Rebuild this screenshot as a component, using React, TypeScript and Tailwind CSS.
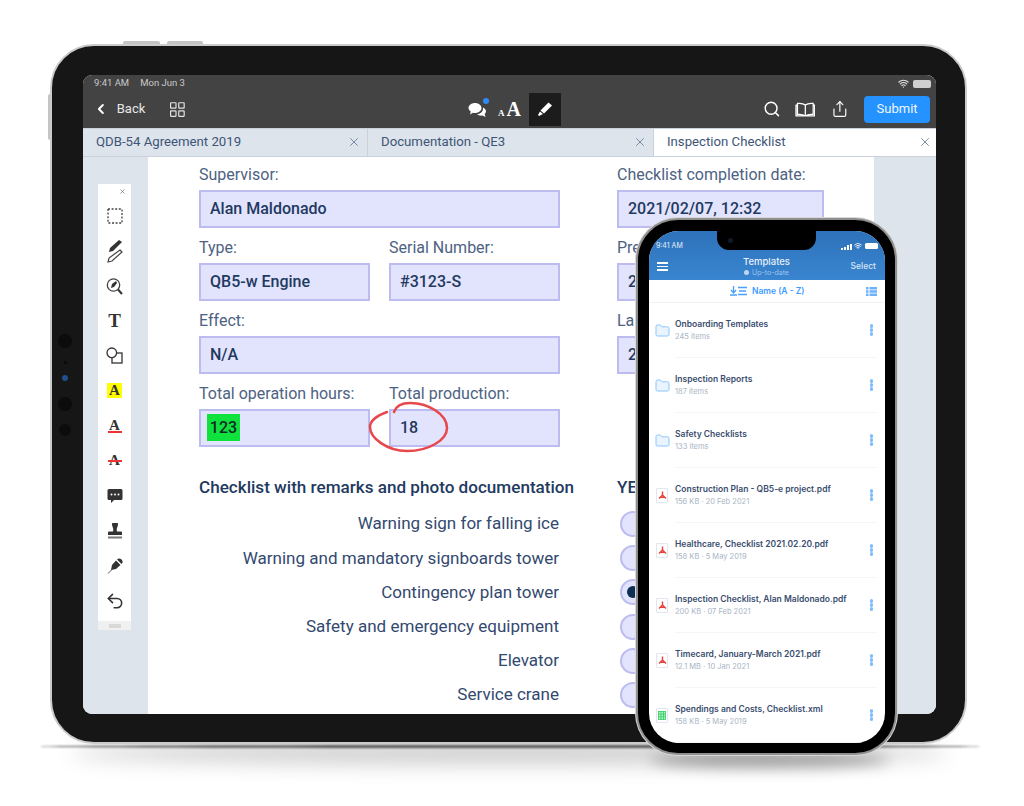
import { ChevronLeft, Search, Share, Undo2, Wifi, X } from "lucide-react";

// TABLET FORM DATA
const checklist = [
  { label: "Warning sign for falling ice", checked: false },
  { label: "Warning and mandatory signboards tower", checked: false },
  { label: "Contingency plan tower", checked: true },
  { label: "Safety and emergency equipment", checked: false },
  { label: "Elevator", checked: false },
  { label: "Service crane", checked: false },
];

// PHONE LIST DATA
const files = [
  { name: "Onboarding Templates", meta: "245 items", type: "folder" },
  { name: "Inspection Reports", meta: "187 items", type: "folder" },
  { name: "Safety Checklists", meta: "133 items", type: "folder" },
  { name: "Construction Plan - QB5-e project.pdf", meta: "156 KB · 20 Feb 2021", type: "pdf" },
  { name: "Healthcare, Checklist 2021.02.20.pdf", meta: "158 KB · 5 May 2019", type: "pdf" },
  { name: "Inspection Checklist, Alan Maldonado.pdf", meta: "200 KB · 07 Feb 2021", type: "pdf" },
  { name: "Timecard, January-March 2021.pdf", meta: "12.1 MB · 10 Jan 2021", type: "pdf" },
  { name: "Spendings and Costs, Checklist.xml", meta: "158 KB · 5 May 2019", type: "sheet" },
];

const Field = ({ label, value, className }: { label: string; value: string; className: string }) => (
  <div className={className}>
    <div className="h-[20px] mb-[5px] text-[16px] leading-[20px] text-[#4d6282] whitespace-nowrap">{label}</div>
    <div className="h-[38px] flex items-center pl-[9px] pb-[1px] border-2 border-[#bcbcf0] bg-[#e2e3fd] text-[16px] font-medium text-[#1f3a60] whitespace-nowrap">
      {value}
    </div>
  </div>
);

const SerifA = ({ className }: { className: string }) => (
  <span className={`font-['Liberation_Serif',serif] font-bold leading-none text-[#333] ${className}`}>A</span>
);

const ToolSlot = ({ children }: { children: React.ReactNode }) => (
  <div className="h-[35px] flex items-center justify-center text-[#333]">{children}</div>
);

// LEFT ANNOTATION TOOLBAR
const Toolbar = () => (
  <div className="w-[33px] h-[446px] bg-white flex flex-col">
    <div className="h-[14px] flex justify-end pt-[4px] pr-[5px]">
      <X size={7} strokeWidth={2} className="text-[#555]" />
    </div>
    <ToolSlot>
      <svg width="16" height="16" viewBox="0 0 16 16" fill="none" stroke="#444" strokeWidth="1.3" strokeDasharray="2 1.6">
        <rect x="1" y="1" width="14" height="14" />
      </svg>
    </ToolSlot>
    <ToolSlot>
      <svg width="16" height="24" viewBox="0 0 16 24" fill="none">
        <path d="M12 1 15 3 6 12 2 13 3 9Z" fill="#333" />
        <path d="M13 11 15 13 5 22 1 23 2 19Z" fill="#fff" stroke="#444" strokeWidth="1.2" />
      </svg>
    </ToolSlot>
    <ToolSlot>
      <svg width="17" height="18" viewBox="0 0 17 18" fill="none">
        <circle cx="7.5" cy="8" r="6.2" stroke="#444" strokeWidth="1.3" />
        <path d="M5 11 6 7 10 4 11 6 8 10Z" fill="#333" />
        <path d="M12 12.5 16 17" stroke="#333" strokeWidth="2" />
      </svg>
    </ToolSlot>
    <ToolSlot>
      <span className="font-['Liberation_Serif',serif] font-bold text-[19px] leading-none text-[#333]">T</span>
    </ToolSlot>
    <ToolSlot>
      <svg width="17" height="17" viewBox="0 0 17 17" fill="#fff" stroke="#333" strokeWidth="1.3">
        <rect x="6" y="6" width="10" height="10" />
        <circle cx="5.8" cy="5.8" r="4.8" />
      </svg>
    </ToolSlot>
    <ToolSlot>
      <div className="w-[15px] h-[15px] bg-[#ffff00] flex items-center justify-center">
        <SerifA className="text-[15px]" />
      </div>
    </ToolSlot>
    <ToolSlot>
      <div className="w-[14px] flex flex-col items-center">
        <SerifA className="text-[15px] h-[13px]" />
        <div className="w-[14px] h-[2px] bg-[#e33]" />
      </div>
    </ToolSlot>
    <ToolSlot>
      <div className="relative w-[14px] flex justify-center">
        <SerifA className="text-[15px]" />
        <div className="absolute left-0 top-[7px] w-[14px] h-[1.5px] bg-[#e33]" />
      </div>
    </ToolSlot>
    <ToolSlot>
      <svg width="16" height="16" viewBox="0 0 16 16">
        <path d="M2 1h12a1.5 1.5 0 0 1 1.5 1.5v8a1.5 1.5 0 0 1-1.5 1.5H7l-3 3v-3H2A1.5 1.5 0 0 1 .5 10.500v-8A1.500 1.500 0 0 1 2 1Z" fill="#333" />
        <circle cx="4.500" cy="6.500" r="1" fill="#fff" />
        <circle cx="8" cy="6.500" r="1" fill="#fff" />
        <circle cx="11.500" cy="6.500" r="1" fill="#fff" />
      </svg>
    </ToolSlot>
    <ToolSlot>
      <svg width="16" height="16" viewBox="0 0 16 16" fill="#333">
        <path d="M5 1.500a3 3 0 0 1 6 0c0 2-1.300 3-1.300 5.500 0 1 .3 1.500 1 1.500H14a1 1 0 0 1 1 1V12H1V9.500a1 1 0 0 1 1-1h3.300c.7 0 1-.5 1-1.500C6.300 4.500 5 3.500 5 1.500Z" />
        <rect x="1" y="13.500" width="14" height="2" fill="#777" />
      </svg>
    </ToolSlot>
    <ToolSlot>
      <svg width="16" height="16" viewBox="0 0 16 16" fill="none">
        <path d="M9 2.500 13.500 7 9 11 4 12l1-5Z" fill="#333" />
        <path d="M10 1.500a2 2 0 0 1 4.500 4.500Z" fill="#333" />
        <path d="M5 11.500 1 15.500" stroke="#555" strokeWidth="1" />
      </svg>
    </ToolSlot>
    <ToolSlot>
      <Undo2 size={20} strokeWidth={1.9} className="text-[#333]" />
    </ToolSlot>
    <div className="flex-1" />
    <div className="h-[9px] bg-[#f0f0f0] flex items-center justify-center">
      <div className="w-[12px] h-[4px] bg-[#d8d8d8]" />
    </div>
  </div>
);

// TABLET
const Tablet = () => (
  <div className="relative w-[917px] h-[700px] rounded-[44px] bg-[#161616] border-2 border-[#cbcbcb] pt-[29px] pb-[28px] pl-[31px] pr-[29px]">
    {/* Side camera dots */}
    <div className="absolute left-[6px] top-[288px] w-[14px] flex flex-col items-center">
      <div className="w-[14px] h-[14px] rounded-full bg-[#0c0c0c]" />
      <div className="mt-[13px] w-[3px] h-[3px] rounded-full bg-[#090909]" />
      <div className="mt-[11px] w-[6px] h-[6px] rounded-full bg-[#1f4f8c]" />
      <div className="mt-[16px] w-[14px] h-[14px] rounded-full bg-[#0c0c0c]" />
      <div className="mt-[13px] w-[12px] h-[12px] rounded-full bg-[#0c0c0c]" />
    </div>

    <div className="w-full h-full rounded-[9px] overflow-hidden bg-white flex flex-col font-['Roboto',sans-serif]">
      {/* STATUS BAR */}
      <div className="h-[17px] bg-[#434343] flex items-center pl-[11px] pr-[5px] text-[9.500px] text-[#c9c9c9] shrink-0">
        <span>9:41 AM</span>
        <span className="ml-[11px]">Mon Jun 3</span>
        <Wifi size={11} strokeWidth={2.5} className="ml-auto text-[#e0e0e0]" />
        <div className="ml-[4px] w-[18px] h-[8px] rounded-[2px] bg-[#cfcfcf]" />
      </div>

      {/* TOP BAR */}
      <div className="h-[36px] bg-[#434343] flex items-center pb-[2px] pl-[11px] pr-[6px] text-white shrink-0">
        <ChevronLeft size={16} strokeWidth={3} className="-ml-[1px]" />
        <span className="ml-[8px] text-[13px] text-[#e8e8e8]">Back</span>
        <svg className="ml-[25px]" width="15" height="15" viewBox="0 0 15 15" fill="none" stroke="#e4e4e4" strokeWidth="1.2">
          <rect x="0.600" y="0.600" width="5.500" height="5.500" rx="0.500" />
          <rect x="8.900" y="0.600" width="5.500" height="5.500" rx="0.500" />
          <rect x="0.600" y="8.900" width="5.500" height="5.500" rx="0.500" />
          <rect x="8.900" y="8.900" width="5.500" height="5.500" rx="0.500" />
        </svg>
        <div className="relative ml-[283px] w-[19px] h-[17px]">
          <svg width="19" height="17" viewBox="0 0 19 17" fill="#fff">
            <path d="M7 2c3.500 0 6.500 2.300 6.500 5S10.500 12 7 12c-.7 0-1.300-.1-2-.2L2 13.500l.8-3C1.300 9.500.5 8.300.5 7 .5 4.300 3.500 2 7 2Z" />
            <path d="M15 6.500c1.800.8 3 2.300 3 3.800 0 1-.5 2-1.300 2.700l.8 3-3-1.500c-2 .4-4-.1-5.500-1.200 3.500-.2 6.500-3 6-6.800Z" />
          </svg>
          <div className="absolute -top-[3px] right-[-2px] w-[6px] h-[6px] rounded-full bg-[#2f8bf5]" />
        </div>
        <div className="ml-[11px] w-[26px] flex items-baseline font-['Liberation_Serif',serif] font-bold text-white leading-none">
          <span className="text-[9px]">A</span>
          <span className="ml-[2px] text-[20px]">A</span>
        </div>
        <div className="ml-[5px] w-[33px] h-[33px] bg-[#1c1c1c] flex items-center justify-center">
          <svg width="16" height="16" viewBox="0 0 16 16" fill="#fff">
            <path d="M11.500 1.500 15 4.500 7 12.500 3.500 9.500Z" />
            <path d="M3 10.500 6 13 2 15 1 14Z" />
          </svg>
        </div>
        <Search size={18} strokeWidth={2} className="ml-[202px] text-white" />
        <svg className="ml-[14px]" width="21" height="15" viewBox="0 0 21 15" fill="none" stroke="#fff" strokeWidth="1.300" strokeLinejoin="round">
          <path d="M10.500 3C8.500 1.300 5.500 1 2.500 1.300V12.500c3-.3 6 0 8 1.500 2-1.500 5-1.800 8-1.500V1.300C15.500 1 12.500 1.300 10.500 3ZM10.500 3V14M2.500 3H1V14h19V3h-1.500" />
        </svg>
        <Share size={18} strokeWidth={1.6} className="ml-[16px] text-white" />
        <div className="ml-[15px] w-[67px] h-[27px] rounded-[4px] bg-[#2492ff] flex items-center justify-center text-[13px] text-[#eef6ff]">
          Submit
        </div>
      </div>

      {/* TABS */}
      <div className="h-[29px] flex shrink-0 text-[13.200px] text-[#3e5577] border-y border-[#c8d1dc]">
        <div className="w-[285px] bg-[#dde4ec] border-r border-[#c8d1dc] flex items-center pl-[13px] pr-[6px] pb-[2px] justify-between">
          QDB-54 Agreement 2019
          <X size={14} strokeWidth={1.5} className="text-[#6b7f99]" />
        </div>
        <div className="w-[286px] bg-[#dde4ec] border-r border-[#c8d1dc] flex items-center pl-[13px] pr-[6px] pb-[2px] justify-between">
          Documentation - QE3
          <X size={14} strokeWidth={1.5} className="text-[#6b7f99]" />
        </div>
        <div className="flex-1 bg-white flex items-center pl-[13px] pr-[4px] pb-[2px] justify-between">
          Inspection Checklist
          <X size={14} strokeWidth={1.5} className="text-[#6b7f99]" />
        </div>
      </div>

      {/* DOCUMENT AREA */}
      <div className="flex-1 flex min-h-0 bg-[#dde4ec]">
        <div className="w-[65px] shrink-0 pl-[15px] pt-[27px]">
          <Toolbar />
        </div>
        <div className="relative w-[726px] shrink-0 bg-white pl-[51px] pt-[8px] overflow-hidden">
          <div className="flex">
            <div className="w-[361px] shrink-0 flex flex-wrap gap-x-[19px] gap-y-[10px]">
              <Field className="w-[361px]" label="Supervisor:" value="Alan Maldonado" />
              <Field className="w-[171px]" label="Type:" value="QB5-w Engine" />
              <Field className="w-[171px]" label="Serial Number:" value="#3123-S" />
              <Field className="w-[361px]" label="Effect:" value="N/A" />
              <Field className="w-[171px]" label="Total operation hours:" value="" />
              <Field className="w-[171px]" label="Total production:" value="18" />
            </div>
            <div className="ml-[57px] w-[207px] shrink-0 flex flex-col gap-y-[10px]">
              <Field className="w-[207px]" label="Checklist completion date:" value="2021/02/07, 12:32" />
              <Field className="w-[207px]" label="Pre" value="2" />
              <Field className="w-[207px]" label="La" value="2" />
            </div>
          </div>

          {/* CHECKLIST */}
          <div className="mt-[31px] flex h-[20px] items-center text-[17.100px] font-medium text-[#1f3a60] whitespace-nowrap">
            <div className="w-[418px] shrink-0">Checklist with remarks and photo documentation</div>
            <div>YES</div>
          </div>
          <div className="mt-[9px]">
            {checklist.map((item) => (
              <div key={item.label} className="h-[34.200px] flex items-center">
                <div className="w-[360px] shrink-0 text-right text-[17.050px] text-[#33496f] whitespace-nowrap">{item.label}</div>
                <div className="ml-[61px] w-[26px] h-[26px] rounded-full border-2 border-[#bcbcf0] bg-[#e2e3fd] flex items-center justify-center">
                  {item.checked && <div className="w-[12px] h-[12px] rounded-full bg-[#0f2d55]" />}
                </div>
              </div>
            ))}
          </div>

          {/* Green highlight over 123 */}
          <div className="absolute left-[59px] top-[257px] w-[33px] h-[27px] bg-[#0fe23c] flex items-center justify-center text-[16px] font-medium text-[#0d2a28]">
            123
          </div>

          {/* Red pen annotation */}
          <svg className="absolute left-[215px] top-[243px]" width="90" height="55" viewBox="0 0 90 55" fill="none" stroke="#e8474c" strokeWidth="2.500" strokeLinecap="round">
            <path d="M24 12C13 16 7 21 7 27c0 11 17 24 37 24 22 0 40-11 40-23C84 14 65 3 47 3c-9 0-14 3-16 9" />
          </svg>
        </div>
      </div>
    </div>

    {/* Top buttons */}
    <div className="absolute -top-[5px] left-[71px] w-[37px] h-[3px] bg-[#c4c4c4] rounded-t-[2px]" />
    <div className="absolute -top-[5px] left-[115px] w-[36px] h-[3px] bg-[#c4c4c4] rounded-t-[2px]" />
    {/* Side button */}
    <div className="absolute -left-[4px] top-[48px] w-[2px] h-[46px] bg-[#c4c4c4] rounded-l-[2px]" />
  </div>
);

const FileIcon = ({ type }: { type: string }) => {
  if (type === "folder") {
    return (
      <svg width="15" height="13" viewBox="0 0 15 13" fill="#e9f4ff" stroke="#8cc6fb" strokeWidth="1">
        <path d="M1 2.500A1.500 1.500 0 0 1 2.500 1h3l1.500 1.800h5.500A1.500 1.500 0 0 1 14 4.300v6.200a1.500 1.500 0 0 1-1.500 1.500h-10A1.500 1.500 0 0 1 1 10.500Z" />
      </svg>
    );
  }
  return (
    <div className="w-[12px] h-[15px] border border-[#e2e6ee] rounded-[1px] bg-white flex items-center justify-center">
      {type === "pdf" ? (
        <svg width="9" height="9" viewBox="0 0 9 9" fill="none" stroke="#e8413c" strokeWidth="1.400">
          <path d="M4.500 .5V4M4.500 4 1 7.500M4.500 4 8 7.500M2.200 6.200H6.800" />
        </svg>
      ) : (
        <svg width="8" height="9" viewBox="0 0 8 9" fill="#b9f0c4" stroke="#2ecc5f" strokeWidth="0.800">
          <rect x=".5" y=".5" width="7" height="8" />
          <path d="M.5 3.200h7M.5 5.800h7M3 .5v8M5.500 .5v8" />
        </svg>
      )}
    </div>
  );
};

const Dots = () => (
  <div className="flex flex-col gap-[0.500px] mr-[-1px]">
    <div className="w-[3.500px] h-[3.500px] rounded-full bg-[#7fbdfb]" />
    <div className="w-[3.500px] h-[3.500px] rounded-full bg-[#7fbdfb]" />
    <div className="w-[3.500px] h-[3.500px] rounded-full bg-[#7fbdfb]" />
  </div>
);

// PHONE
const Phone = () => (
  <div className="w-[261px] h-[537px] rounded-[42px] bg-black border-2 border-[#8f8f8f] pt-[11px] pb-[10px] pl-[11px] pr-[10px] shadow-[0_0_0_1px_#d8d8d8]">
    <div className="relative w-full h-full rounded-[30px] overflow-hidden bg-white flex flex-col font-['Inter',sans-serif]">
      {/* Notch */}
      <div className="absolute top-0 left-[68px] w-[99px] h-[19px] bg-black rounded-b-[12px] flex items-center pl-[11px]">
        <div className="w-[5px] h-[5px] rounded-full bg-[#10182a]" />
      </div>

      {/* HEADER */}
      <div className="h-[49px] shrink-0 bg-gradient-to-b from-[#2d72ba] to-[#3a85d0] text-white flex flex-col">
        <div className="h-[22px] flex items-center pt-[8px] pl-[7px] pr-[7px] text-[7px] text-[#e6effa]">
          <span>9:41 AM</span>
          <div className="ml-auto flex items-end gap-[1px] h-[7px]">
            <div className="w-[2px] h-[2px] bg-white" />
            <div className="w-[2px] h-[3px] bg-white" />
            <div className="w-[2px] h-[5px] bg-white" />
            <div className="w-[2px] h-[6px] bg-white" />
          </div>
          <Wifi size={8} strokeWidth={3} className="ml-[2px]" />
          <div className="ml-[3px] w-[13px] h-[6px] rounded-[1.500px] bg-white" />
        </div>
        <div className="flex-1 flex items-center pl-[8px] pr-[9px]">
          <div className="w-[40px]">
            <div className="w-[11px] flex flex-col gap-[2px]">
              <div className="h-[1.500px] bg-white" />
              <div className="h-[1.500px] bg-white" />
              <div className="h-[1.500px] bg-white" />
            </div>
          </div>
          <div className="flex-1 flex flex-col items-center">
            <div className="text-[9.500px] leading-[12px] font-medium text-[#e8f0fa]">Templates</div>
            <div className="flex items-center gap-[3px] text-[7px] leading-[10px] text-[#9cc3ec]">
              <div className="w-[5px] h-[5px] rounded-full bg-[#bcd6f2]" />
              Up-to-date
            </div>
          </div>
          <div className="w-[40px] text-right text-[8.500px] font-medium text-[#d7e6f7]">Select</div>
        </div>
      </div>

      {/* SORT ROW */}
      <div className="h-[23px] shrink-0 flex items-center pr-[8px] text-[#3d9bff] border-b border-[#f0f2f5]">
        <svg className="ml-[81px]" width="18" height="10" viewBox="0 0 18 10" fill="none" stroke="#4aa0ff" strokeWidth="1.300">
          <path d="M3.500 0v6M1 4l2.500 3L6 4M0 9h7M8 1.500h9M9 5h7M8 8.500h9" />
        </svg>
        <span className="ml-[4px] text-[8.500px] font-semibold">Name (A - Z)</span>
        <svg className="ml-auto" width="11" height="9" viewBox="0 0 11 9" fill="#6db2fb">
          <rect width="2.500" height="2.500" />
          <rect x="3.500" width="7.500" height="2.500" />
          <rect y="3.250" width="2.500" height="2.500" />
          <rect x="3.500" y="3.250" width="7.500" height="2.500" />
          <rect y="6.500" width="2.500" height="2.500" />
          <rect x="3.500" y="6.500" width="7.500" height="2.500" />
        </svg>
      </div>

      {/* FILE LIST */}
      {files.map((file) => (
        <div key={file.name} className="h-[55px] shrink-0 flex items-center pl-[5px]">
          <div className="w-[16px] flex justify-center">
            <FileIcon type={file.type} />
          </div>
          <div className="ml-[5px] w-[202px] h-full flex items-center justify-between pr-[5px] border-b border-[#f3f5f8]">
            <div>
              <div className="text-[8.500px] leading-[11px] font-semibold text-[#3a4d6e] whitespace-nowrap">{file.name}</div>
              <div className="mt-[2px] text-[7.500px] leading-[10px] text-[#a9b4c5] whitespace-nowrap">{file.meta}</div>
            </div>
            <Dots />
          </div>
        </div>
      ))}
    </div>
  </div>
);

export default function App() {
  return (
    <div className="relative w-[1024px] h-[806px] bg-white overflow-hidden pl-[50px] pt-[44px]">
      {/* Shadows under the devices */}
      <div className="absolute left-[70px] top-[742px] w-[880px] h-[22px] bg-black/20 blur-[10px] rounded-[50%]" />
      <div className="absolute left-[40px] top-[745px] w-[940px] h-[3px] bg-[#555] blur-[1px] rounded-[50%]" />
      <div className="absolute left-[650px] top-[752px] w-[240px] h-[16px] bg-black/30 blur-[7px] rounded-[50%]" />

      <div className="relative">
        <Tablet />
      </div>

      <div className="absolute left-[636px] top-[218px]">
        <Phone />
      </div>
    </div>
  );
}
